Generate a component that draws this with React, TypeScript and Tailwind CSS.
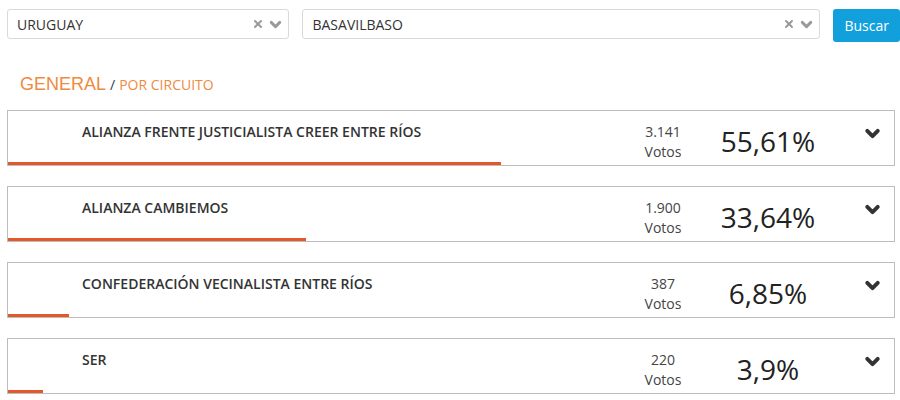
import { ChevronDown, X } from "lucide-react"

type Resultado = {
  nombre: string
  votos: string
  porcentaje: string
  valor: number
}

const resultados: Resultado[] = [
  { nombre: "ALIANZA FRENTE JUSTICIALISTA CREER ENTRE RÍOS", votos: "3.141", porcentaje: "55,61%", valor: 55.61 },
  { nombre: "ALIANZA CAMBIEMOS", votos: "1.900", porcentaje: "33,64%", valor: 33.64 },
  { nombre: "CONFEDERACIÓN VECINALISTA ENTRE RÍOS", votos: "387", porcentaje: "6,85%", valor: 6.85 },
  { nombre: "SER", votos: "220", porcentaje: "3,9%", valor: 3.9 },
]

const Selector = ({ valor, ancho }: { valor: string; ancho: string }) => (
  <div
    className={`${ancho} h-[30px] flex items-center border border-[#d9d9d9] rounded-[3px] bg-white pl-[9px] pr-[4px] text-[14px] text-[#333]`}
  >
    <span className="flex-1">{valor}</span>
    <X className="w-[12px] h-[12px] text-[#999] mr-[3px]" strokeWidth={4} />
    <ChevronDown className="w-[17px] h-[17px] text-[#999]" strokeWidth={4} />
  </div>
)

export default function App() {
  return (
    <div className="w-[900px] h-[400px] overflow-hidden bg-white font-['Open_Sans',sans-serif]">
      <div className="flex items-start pl-[7px] pt-[9px] gap-[13px]">
        <Selector valor="URUGUAY" ancho="w-[283px]" />
        <Selector valor="BASAVILBASO" ancho="w-[519px]" />
        <button className="h-[33px] px-[11px] shrink-0 rounded-[3px] bg-[#12a0dd] text-white text-[14px]">
          Buscar
        </button>
      </div>

      <div className="pl-[20px] mt-[29px] flex items-baseline">
        <span className="font-['Liberation_Sans',sans-serif] text-[18px] text-[#ef8a3e]">GENERAL</span>
        <span className="text-[14px] text-[#2c3e50] ml-[4px]">/</span>
        <span className="text-[14px] text-[#ef8a3e] ml-[4px]">POR CIRCUITO</span>
      </div>

      <div className="ml-[7px] mr-[5px] mt-[12px] flex flex-col gap-[20px]">
        {resultados.map((r) => (
          <div key={r.nombre} className="border border-[#bdbdbd] h-[56px] flex flex-col">
            <div className="flex-1 flex items-start pl-[74px] pr-[11px]">
              <div className="flex-1 pt-[10px] text-[14px] font-semibold text-[#333]">{r.nombre}</div>
              <div className="w-[70px] pt-[11px] text-center text-[14px] leading-[20px] text-[#444]">
                <div>{r.votos}</div>
                <div>Votos</div>
              </div>
              <div className="w-[120px] ml-[10px] pt-[12px] text-center text-[28px] leading-[36px] text-[#222]">
                {r.porcentaje}
              </div>
              <ChevronDown className="w-[21px] h-[21px] ml-[34px] mt-[12px] text-[#333]" strokeWidth={4.5} />
            </div>
            <div className="h-[4px] bg-[#e4572b]" style={{ width: `${r.valor}%` }} />
          </div>
        ))}
      </div>
    </div>
  )
}
